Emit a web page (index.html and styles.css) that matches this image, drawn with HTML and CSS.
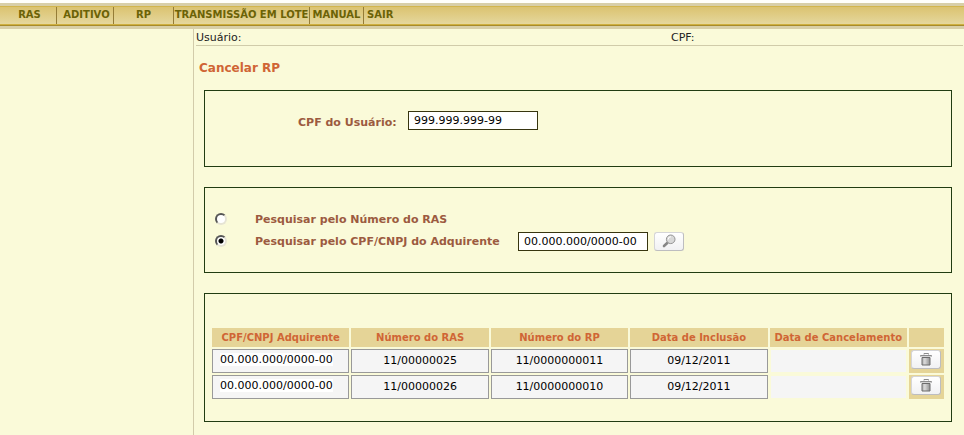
FILE: index.html
```html
<!DOCTYPE html>
<html lang="pt-BR">
<head>
<meta charset="utf-8">
<title>Cancelar RP</title>
<link rel="stylesheet" href="styles.css">
</head>
<body>
<svg class="defs" width="0" height="0" aria-hidden="true">
  <defs>
    <linearGradient id="metal" x1="0" y1="0" x2="1" y2="0"><stop offset="0" stop-color="#b0b0b0"/><stop offset=".35" stop-color="#dadada"/><stop offset="1" stop-color="#909090"/></linearGradient>
    <symbol id="trash" viewBox="0 0 12 13">
      <path d="M4 1.500V.5h4.500v1" fill="none" stroke="#8c8c8c"/>
      <path d="M.5 3.500v-1h11v1" fill="#ccc" stroke="#8d8d8d"/>
      <path d="M1 3h10v1H1z" fill="#d4d4d4"/>
      <path d="M2 4.500h8v7.500H2z" fill="url(#metal)" stroke="#6c6c6c"/>
    </symbol>
    <symbol id="lens" viewBox="0 0 14 14">
      <path d="M2 12 5.200 9" stroke="#868686" stroke-width="2.600" stroke-linecap="round"/>
      <circle cx="8.700" cy="5.300" r="4.300" fill="#d8d8d8" stroke="#949494"/>
      <path d="M6.200 5.500A2.700 2.700 0 0 1 9 2.700" fill="none" stroke="#fff"/>
    </symbol>
  </defs>
</svg>
<header class="topbar">
  <nav class="menu">
    <a class="item item-short" href="#">RAS</a>
    <a class="item item-short" href="#">ADITIVO</a>
    <a class="item item-mid" href="#">RP</a>
    <a class="item item-wide" href="#">TRANSMISSÃO EM LOTE</a>
    <a class="item item-tight" href="#">MANUAL</a>
    <a class="item item-last" href="#">SAIR</a>
  </nav>
</header>
<div class="layout">
  <aside class="side"></aside>
  <main class="main">
    <div class="userbar"><span>Usuário:</span><span>CPF:</span></div>
    <h1>Cancelar RP</h1>
    <section class="panel user-panel">
      <label for="cpf">CPF do Usuário:</label>
      <input class="text" id="cpf" type="text" value="999.999.999-99">
    </section>
    <section class="panel search-panel">
      <div class="option">
        <input type="radio" name="busca" id="por-ras">
        <label for="por-ras">Pesquisar pelo Número do RAS</label>
      </div>
      <div class="option">
        <input type="radio" name="busca" id="por-cpf" checked>
        <label for="por-cpf">Pesquisar pelo CPF/CNPJ do Adquirente</label>
        <input class="text" type="text" value="00.000.000/0000-00" aria-label="CPF/CNPJ do Adquirente">
        <button class="icon-button" type="button" aria-label="Pesquisar"><svg width="14" height="14"><use href="#lens"/></svg></button>
      </div>
    </section>
    <section class="panel results-panel">
      <table>
        <thead>
          <tr><th>CPF/CNPJ Adquirente</th><th>Número do RAS</th><th>Número do RP</th><th>Data de Inclusão</th><th>Data de Cancelamento</th><th class="action"></th></tr>
        </thead>
        <tbody>
          <tr><td class="doc"><span>00.000.000/0000-00</span></td><td>11/00000025</td><td>11/0000000011</td><td>09/12/2011</td><td class="empty"></td><td class="action"><button class="icon-button" type="button" aria-label="Cancelar"><svg width="12" height="13"><use href="#trash"/></svg></button></td></tr>
          <tr><td class="doc"><span>00.000.000/0000-00</span></td><td>11/00000026</td><td>11/0000000010</td><td>09/12/2011</td><td class="empty"></td><td class="action"><button class="icon-button" type="button" aria-label="Cancelar"><svg width="12" height="13"><use href="#trash"/></svg></button></td></tr>
        </tbody>
      </table>
    </section>
  </main>
</div>
</body>
</html>
```
FILE: styles.css
```css
* { box-sizing: border-box; }
body {
  margin: 0;
  min-height: 100vh;
  display: flex;
  flex-direction: column;
  background: #fafad9;
  color: #000;
  font: 11px/14px Verdana, "DejaVu Sans", sans-serif;
}
.defs { position: absolute; }
.topbar {
  border-top: 3px solid #fffffa;
}
.menu {
  display: flex;
  height: 26px;
  padding: 1px 0 2px;
  border-top: 3px solid #d8cfa8;
  border-bottom: 3px solid #d8cfa8;
  background: linear-gradient(#d2b54c 1px, #dbc370 1px, #e5d79d 18px, #cfb040 18px, #cfb040 19px, #a78b2c 19px);
}
.item {
  flex: none;
  border-right: 1px solid #957c36;
  color: #6b6206;
  font-size: 10px;
  font-weight: bold;
  line-height: 16px;
  text-align: center;
  white-space: nowrap;
  text-decoration: none;
}
.item-short { width: 57px; padding-left: 3px; }
.item-mid { width: 60px; }
.item-wide { width: 136px; }
.item-tight { width: 54px; }
.item-last { padding-left: 3px; border-right: 0; }
.layout { flex: 1; display: flex; }
.side { width: 193px; flex: none; }
.main {
  flex: 1;
  min-width: 0;
  padding: 0 1px 12px 2px;
  border-left: 1px solid #d2cbaa;
}
.userbar {
  display: grid;
  grid-template-columns: 475px 1fr;
  height: 17px;
  border-bottom: 1px solid #d0cbaa;
  line-height: 18px;
  color: #222;
}
h1 {
  margin: 15px 0 14px 3px;
  color: #d06535;
  font-size: 12px;
  line-height: 15px;
}
.panel {
  margin: 0 11px 20px 8px;
  border: 1px solid #213c12;
}
label { color: #9c5a40; font-weight: bold; }
.text {
  width: 130px;
  height: 19px;
  padding: 0 5px;
  border: 1px solid #37350f;
  border-radius: 0;
  background: #fff;
  color: #000;
  font: inherit;
}
.user-panel {
  display: flex;
  align-items: center;
  height: 77px;
  padding: 0 0 16px 93px;
}
.user-panel label { width: 110px; padding-top: 5px; }
.search-panel { padding: 20px 10px; }
.option { display: flex; align-items: center; height: 22px; }
.option label { min-width: 291px; padding: 1px 0 0 28px; }
.option .text { margin: 0 6px 0 0; }
input[type="radio"] {
  appearance: none;
  width: 12px;
  height: 12px;
  margin: 0;
  border: 2px solid;
  border-color: #555 #e6e4d4 #e6e4d4 #555;
  border-radius: 50%;
  background: #fff;
}
input[type="radio"]:checked { background: radial-gradient(circle, #000 2px, #fff 3px); }
.icon-button {
  display: flex;
  align-items: center;
  justify-content: center;
  width: 30px;
  height: 19px;
  padding: 0;
  border: 1px solid #d5d5d8;
  border-right-color: #bdbdc0;
  border-bottom-color: #bdbdc0;
  border-radius: 3px;
  background: linear-gradient(#fff, #f1f1f3);
}
.results-panel { margin-bottom: 0; padding: 32px 5px 20px; }
table {
  width: 100%;
  table-layout: fixed;
  border-collapse: separate;
  border-spacing: 2px;
}
th {
  height: 19px;
  padding: 0;
  background: #e5d497;
  color: #d06535;
  font-size: 10px;
  white-space: nowrap;
}
td {
  height: 24px;
  padding: 0;
  border: 1px solid #999;
  background: #f5f5f5;
  text-align: center;
}
.doc { padding: 0 7px 2px; text-align: left; }
.doc span { background: #fff; }
.empty { border-color: #fafad9; }
.action { width: 35px; }
td.action { padding: 0 2px 3px; border: 0; background: #e5d497; }
```
